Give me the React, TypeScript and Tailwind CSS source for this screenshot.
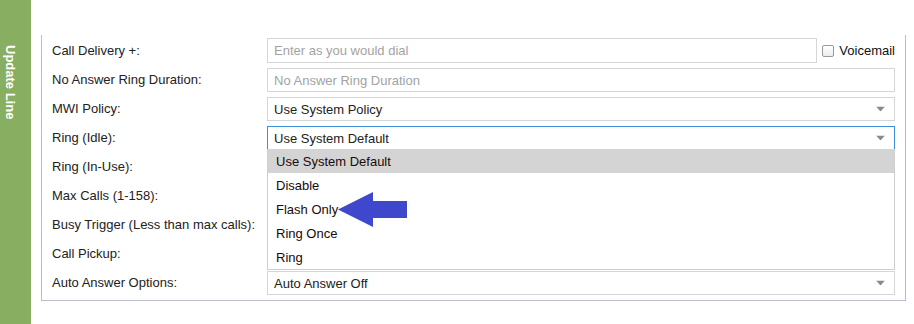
import React from "react";

function Caret() {
  return (
    <svg width="9" height="5" viewBox="0 0 9 5" className="absolute right-[9px] top-1/2 -translate-y-1/2">
      <path d="M0 0 H9 L4.5 5 Z" fill="#8a8a8a" />
    </svg>
  );
}

function Row({ label, children }: { label: string; children?: React.ReactNode }) {
  return (
    <div className="flex h-[24px] items-center">
      <div className="w-[215px] shrink-0 text-[13px] text-[#222]">{label}</div>
      <div className="relative flex h-full flex-1 items-center">{children}</div>
    </div>
  );
}

function Select({ value, focused }: { value: string; focused?: boolean }) {
  return (
    <div
      className={
        "relative flex h-full flex-1 items-center border pl-[6px] pt-[1px] text-[13px] text-[#222] " +
        (focused ? "border-[#3d8fd6]" : "border-[#d6d6d6]")
      }
    >
      {value}
      <Caret />
    </div>
  );
}

function Input({ placeholder }: { placeholder: string }) {
  return (
    <div className="flex h-full flex-1 items-center border border-[#d6d6d6] pl-[6px] pt-[1px] text-[13px] text-[#a3a3a3]">
      {placeholder}
    </div>
  );
}

export default function App() {
  const options = ["Use System Default", "Disable", "Flash Only", "Ring Once", "Ring"];
  return (
    <div className="flex h-[324px] w-[914px] bg-white font-['Liberation_Sans',Arial,sans-serif]">
      <div className="w-[31px] shrink-0 bg-[#88ae61] pt-[45px]">
        <div className="ml-[3px] text-[13px] font-bold leading-[15px] text-white [writing-mode:vertical-rl]">
          Update Line
        </div>
      </div>
      <div className="pl-[10px] pt-[35px]">
        <div className="relative flex h-[266px] w-[865px] flex-col gap-[5px] border-x border-b border-[#b9bccd] pl-[10px] pr-[10px] pt-[3px]">
          <div className="flex h-[25px] items-center">
            <div className="w-[215px] shrink-0 text-[13px] text-[#222]">Call Delivery +:</div>
            <div className="flex h-full flex-1 items-center">
              <Input placeholder="Enter as you would dial" />
              <div className="ml-[5px] mr-[3px] h-[12px] w-[12px] rounded-[2px] border border-[#9a9a9a] bg-gradient-to-b from-white to-[#ececec]" />
              <span className="ml-[2px] text-[13px] text-[#111]">Voicemail</span>
            </div>
          </div>
          <Row label="No Answer Ring Duration:">
            <Input placeholder="No Answer Ring Duration" />
          </Row>
          <Row label="MWI Policy:">
            <Select value="Use System Policy" />
          </Row>
          <Row label="Ring (Idle):">
            <Select value="Use System Default" focused />
            <div className="absolute left-0 right-0 top-[23px] z-10 border-x border-b border-[#cfcfcf] bg-white">
              {options.map((o, i) => (
                <div
                  key={o}
                  className={
                    "flex h-[24px] items-center pl-[8px] pt-[1px] text-[13px] text-[#1a0a0a] " +
                    (i === 0 ? "bg-[#d4d4d4]" : "")
                  }
                >
                  {o}
                </div>
              ))}
            </div>
          </Row>
          <Row label="Ring (In-Use):">
            <Select value="" />
          </Row>
          <Row label="Max Calls (1-158):">
            <Input placeholder="" />
          </Row>
          <Row label="Busy Trigger (Less than max calls):">
            <Input placeholder="" />
          </Row>
          <Row label="Call Pickup:">
            <Select value="" />
          </Row>
          <Row label="Auto Answer Options:">
            <Select value="Auto Answer Off" />
          </Row>
          <svg
            className="absolute left-[296px] top-[157px] z-20"
            width="70"
            height="36"
            viewBox="0 0 70 36"
          >
            <path d="M0 17.5 L35 0 L35 9 L69 9 L69 26 L35 26 L35 35 Z" fill="#3f47cc" />
          </svg>
        </div>
      </div>
    </div>
  );
}
